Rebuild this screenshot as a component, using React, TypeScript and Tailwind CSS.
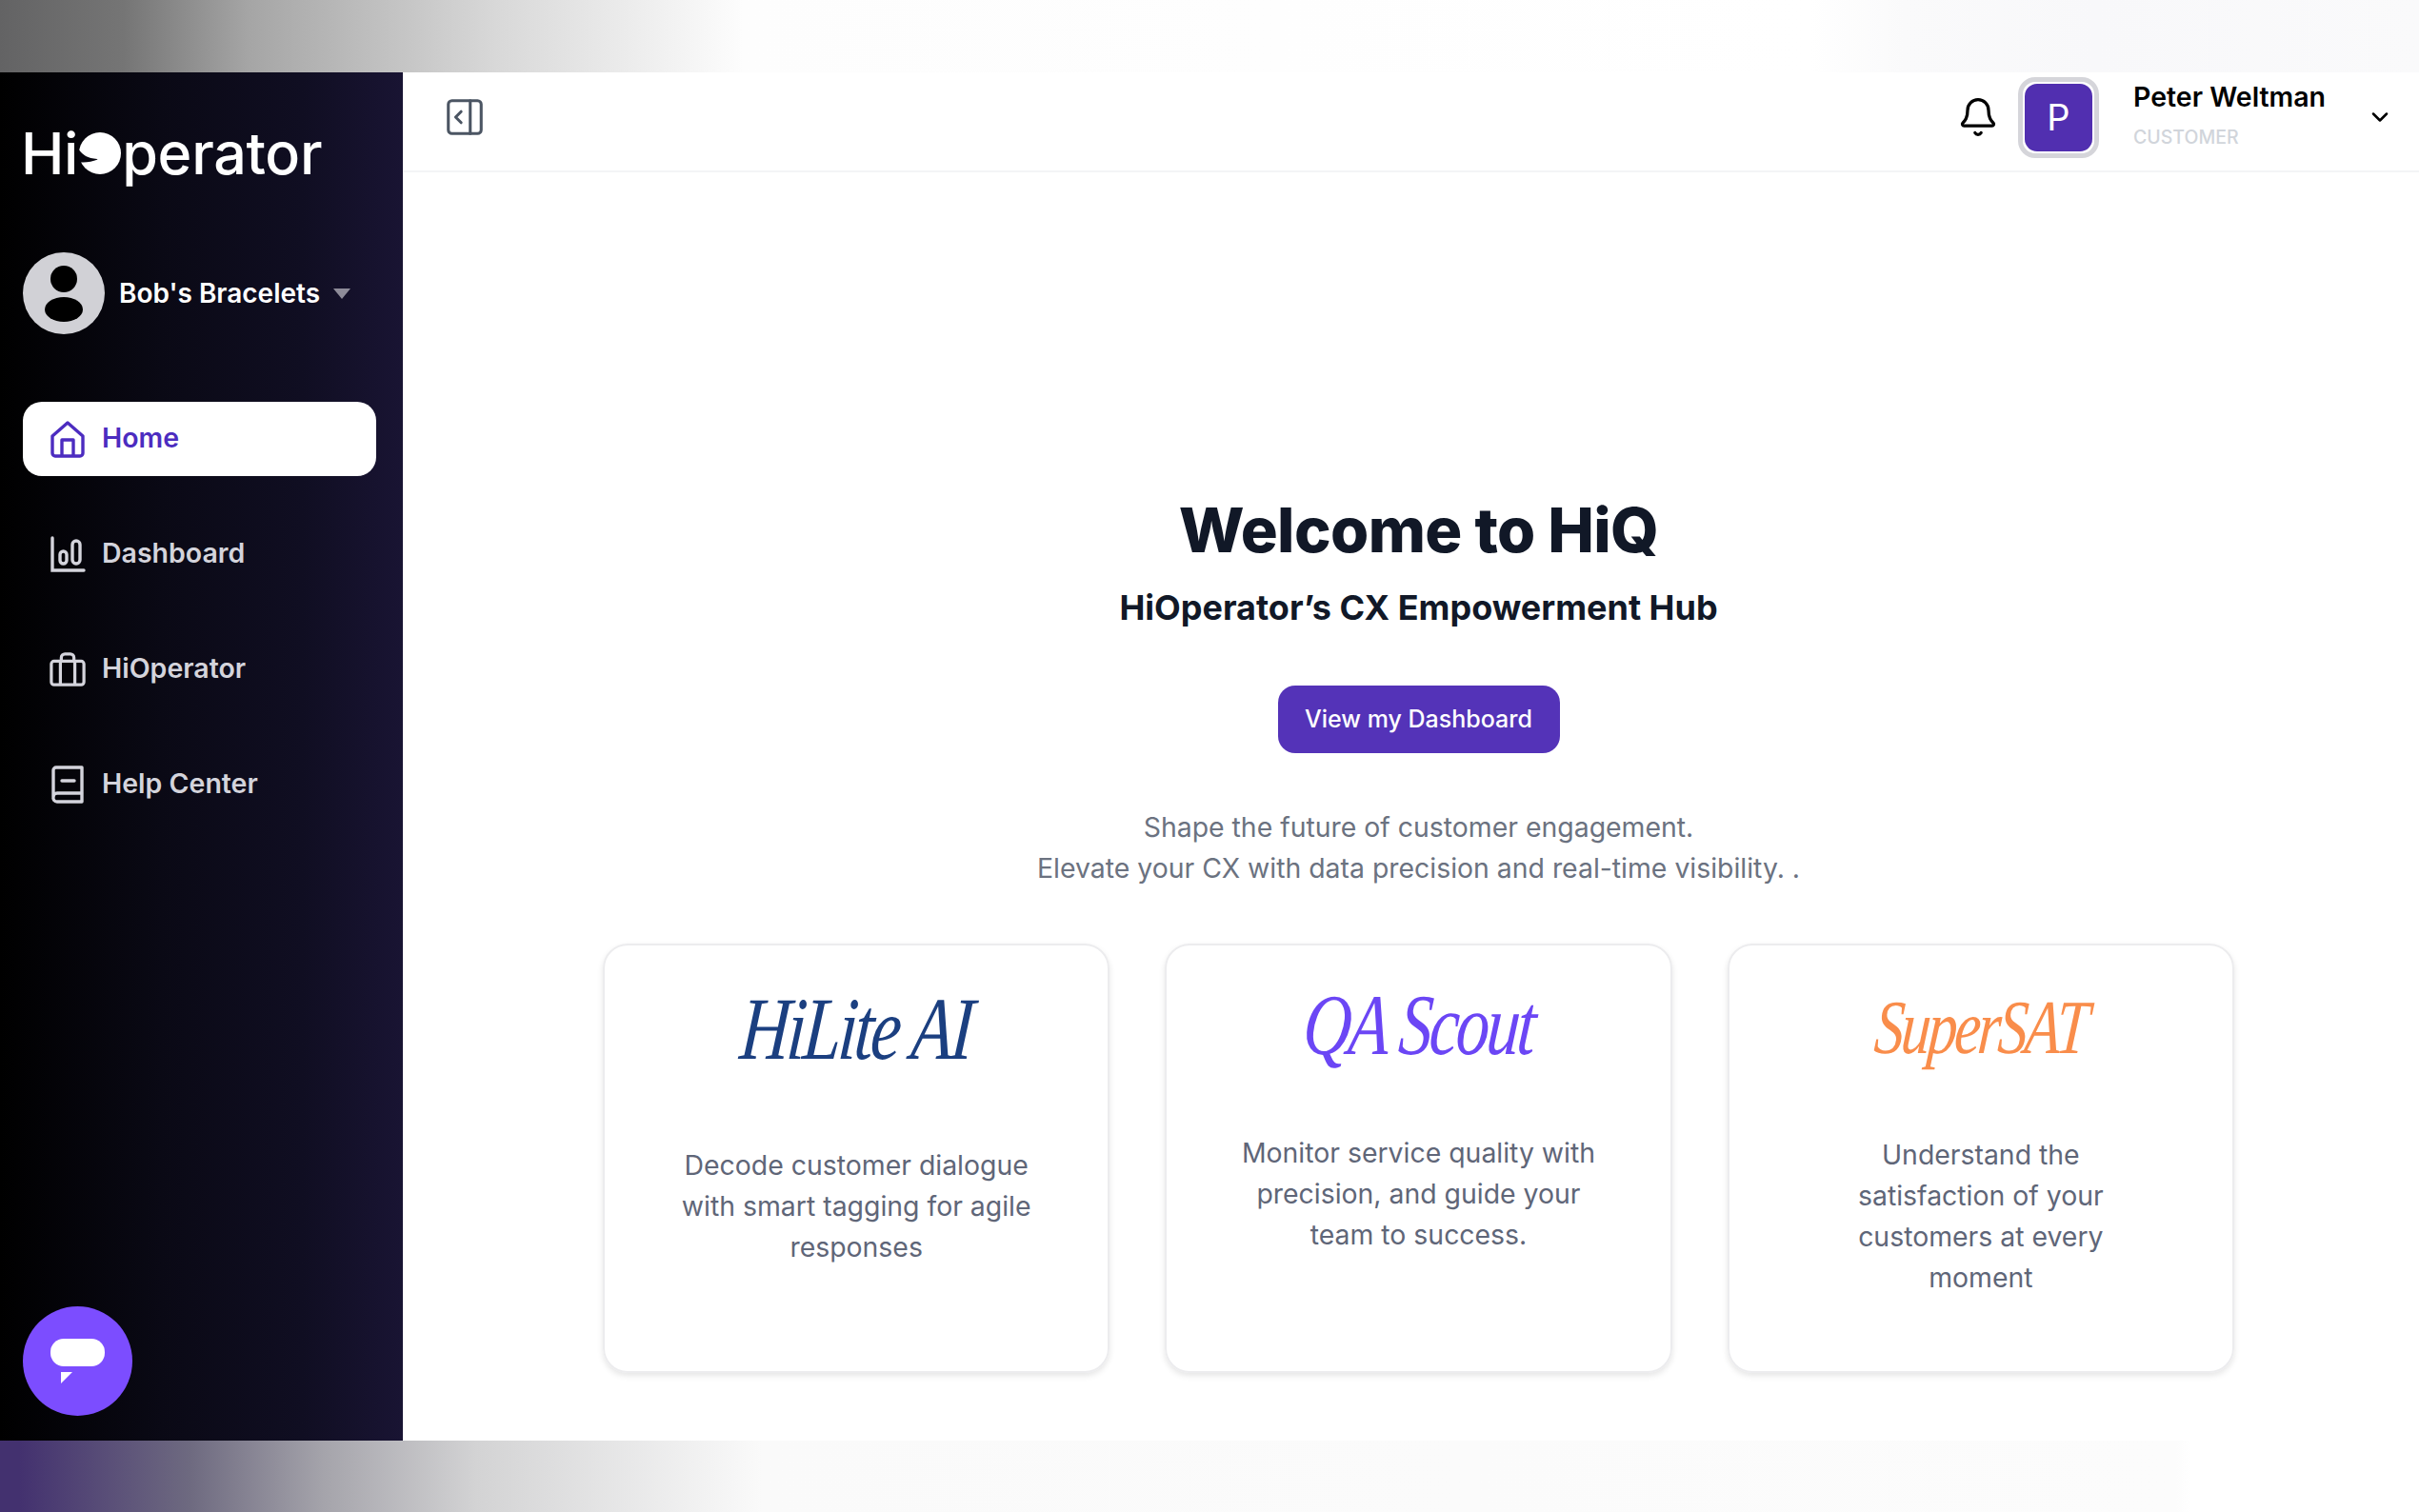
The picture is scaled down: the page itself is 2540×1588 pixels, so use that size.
import { ChevronDown, Bell, PanelRightOpen } from "lucide-react";

const inter = "font-['Inter',sans-serif]";

const HomeIcon = () => (
  <svg width="38" height="40" viewBox="0 0 38 40" fill="none" stroke="currentColor" strokeWidth="3.4" strokeLinejoin="round">
    <path d="M3 17 19 3l16 14v18a3 3 0 0 1-3 3H6a3 3 0 0 1-3-3V17Z" />
    <path d="M13 38V21h12v17" />
  </svg>
);

const ChartIcon = () => (
  <svg width="38" height="40" viewBox="0 0 38 40" fill="none" stroke="currentColor" strokeWidth="3.4" strokeLinecap="round">
    <path d="M3 3v34h33" />
    <rect x="11" y="17" width="7" height="13" rx="3.5" />
    <rect x="24" y="6" width="8" height="24" rx="4" />
  </svg>
);

const CaseIcon = () => (
  <svg width="40" height="38" viewBox="0 0 40 38" fill="none" stroke="currentColor" strokeWidth="3.4" strokeLinejoin="round">
    <rect x="2" y="10" width="36" height="26" rx="3" />
    <path d="M12 36V10M28 36V10M13 10V6a4 4 0 0 1 4-4h6a4 4 0 0 1 4 4v4" />
  </svg>
);

const BookIcon = () => (
  <svg width="36" height="40" viewBox="0 0 36 40" fill="none" stroke="currentColor" strokeWidth="3.4" strokeLinecap="round" strokeLinejoin="round">
    <path d="M3 33V5a3 3 0 0 1 3-3h27v36H7a4 4 0 0 1-4-5Zm0 0a4 4 0 0 1 4-4h26" />
    <path d="M12 16h13" />
  </svg>
);

const navItems = [
  { label: "Home", Icon: HomeIcon, active: true },
  { label: "Dashboard", Icon: ChartIcon, active: false },
  { label: "HiOperator", Icon: CaseIcon, active: false },
  { label: "Help Center", Icon: BookIcon, active: false },
];

const cards = [
  {
    name: "HiLite AI",
    logo: "text-[#1b3f80] text-[72px] h-[176px]",
    textGap: "mt-[33px]",
    text: "Decode customer dialogue with smart tagging for agile responses",
  },
  {
    name: "QA Scout",
    logo: "text-[#6b46f5] text-[70px] h-[168px]",
    textGap: "mt-[28px]",
    text: "Monitor service quality with precision, and guide your team to success.",
  },
  {
    name: "SuperSAT",
    logo: "text-[#f98d4b] text-[62px] h-[172px]",
    textGap: "mt-[26px] mx-[10px]",
    text: "Understand the satisfaction of your customers at every moment",
  },
];

const Sidebar = () => (
  <aside className="w-[423px] shrink-0 bg-[linear-gradient(to_right,#000000,#0a0915_40%,#100e22_75%,#191433)] flex flex-col px-6 pb-[26px]">
    <div className="flex items-center h-[56px] mt-[57px] -ml-[2px] text-white text-[61px] font-medium leading-none tracking-[-0.3px]">
      <span>Hi</span>
      <svg width="44" height="44" viewBox="0 0 44 44" className="mx-[1px] shrink-0">
        <circle cx="22" cy="22" r="22" fill="#fff" />
        <path d="M-1 17C3 23 8 27 19 28l.5.5C13 31 6 32-1 31Z" fill="#07060f" />
      </svg>
      <span>perator</span>
    </div>

    <div className="flex items-center mt-[76px]">
      <div className="w-[86px] h-[86px] rounded-full bg-[#d1d1d6] flex flex-col items-center justify-center gap-[5px]">
        <div className="w-[28px] h-[28px] rounded-full bg-black" />
        <div className="w-[40px] h-[26px] rounded-[50%] bg-black" />
      </div>
      <span className="ml-[15px] text-white text-[28px] font-semibold leading-none">Bob's Bracelets</span>
      <div className="ml-[14px] w-0 h-0 border-x-[9px] border-x-transparent border-t-[11px] border-t-[#8e8c99]" />
    </div>

    <nav className="flex flex-col gap-[43px] mt-[71px] w-[371px]">
      {navItems.map(({ label, Icon, active }) => (
        <div
          key={label}
          className={
            active
              ? "h-[78px] rounded-[20px] bg-white text-[#4c2cc0] flex items-center pl-[28px]"
              : "h-[78px] rounded-[20px] text-[#d4d4dc] flex items-center pl-[28px]"
          }
        >
          <div className="w-[38px] flex justify-center">
            <Icon />
          </div>
          <span className="ml-[17px] text-[28.5px] font-semibold leading-none pb-[2px]">{label}</span>
        </div>
      ))}
    </nav>

    <div className="mt-auto w-[115px] h-[115px] rounded-full bg-[#7c4dff] flex flex-col items-center justify-center">
      <div className="w-[57px] h-[29px] rounded-[14px] bg-white" />
      <div className="w-[57px] mt-[6px] pl-[11px]">
        <div className="w-0 h-0 border-t-[12px] border-t-white border-r-[12px] border-r-transparent" />
      </div>
    </div>
  </aside>
);

const Header = () => (
  <header className="h-[105px] shrink-0 border-b-2 border-[#f3f4f6] flex items-center pl-[42px] pr-[27px] pb-[9px]">
    <PanelRightOpen size={46} strokeWidth={1.6} className="text-[#4b5563]" />
    <div className="ml-auto flex items-center">
      <Bell size={44} strokeWidth={1.8} className="text-black" />
      <div className="ml-[20px] w-[85px] h-[85px] rounded-[18px] border-[5px] border-[#d5d5da] p-[2px]">
        <div className="w-full h-full rounded-[13px] bg-[#512fb0] text-white text-[38px] flex items-center justify-center">
          P
        </div>
      </div>
      <div className="ml-[36px] w-[245px] flex flex-col gap-[19px] -mt-[4px]">
        <span className="text-[28.5px] font-semibold leading-none text-black">Peter Weltman</span>
        <span className="text-[19.5px] font-medium leading-none text-[#d1d5db]">CUSTOMER</span>
      </div>
      <ChevronDown size={28} strokeWidth={2.2} className="text-black" />
    </div>
  </header>
);

const Main = () => (
  <main className="flex-1 flex flex-col items-center pl-[210px] pr-[194px] pt-[343px]">
    <h1 className="text-[65px] font-extrabold leading-none text-[#111827] tracking-[-0.6px]">Welcome to HiQ</h1>
    <h2 className="mt-[31px] text-[36px] font-bold leading-none text-[#111827]">
      HiOperator’s CX Empowerment Hub
    </h2>
    <button className="mt-[64px] w-[296px] h-[71px] rounded-[18px] bg-[#5433b8] text-white text-[25px] font-medium">
      View my Dashboard
    </button>
    <p className="mt-[56px] text-center text-[28.4px] leading-[43px] text-[#6b7280]">
      Shape the future of customer engagement.
      <br />
      Elevate your CX with data precision and real-time visibility. .
    </p>
    <div className="w-full grid grid-cols-3 gap-[58px] mt-[58px]">
      {cards.map((card) => (
        <div key={card.name} className="h-[451px] rounded-[26px] border-2 border-[#ececee] shadow-[0_3px_6px_rgba(0,0,0,0.1)] px-[77px] text-center">
          <div className={`${card.logo} flex items-center justify-center font-['Liberation_Serif',serif] italic leading-none tracking-[-3px]`}>
            <span className="inline-block scale-y-[1.3] -skew-x-6 whitespace-nowrap">{card.name}</span>
          </div>
          <p className={`${card.textGap} text-[28.4px] leading-[43px] text-[#5f6678]`}>{card.text}</p>
        </div>
      ))}
    </div>
  </main>
);

export default function App() {
  return (
    <div className={`${inter} w-[2540px] h-[1588px] flex flex-col bg-white overflow-hidden`}>
      <div className="h-[76px] shrink-0 bg-[linear-gradient(to_right,#636364_0px,#757575_130px,#a5a5a5_260px,#d8d8d8_520px,#fdfdfd_780px,#ffffff_1900px,#fafafb_2000px,#f8f8fa_2200px,#fafafb_2540px)]" />
      <div className="flex-1 flex min-h-0">
        <Sidebar />
        <div className="flex-1 flex flex-col min-w-0">
          <Header />
          <Main />
        </div>
      </div>
      <div className="h-[75px] shrink-0 bg-[linear-gradient(to_right,#43316f_20px,#6e6a80_200px,#a5a4ab_340px,#d3d3d4_500px,#fafafa_800px,#fcfcfc_2285px,#ffffff_2300px)]" />
    </div>
  );
}
